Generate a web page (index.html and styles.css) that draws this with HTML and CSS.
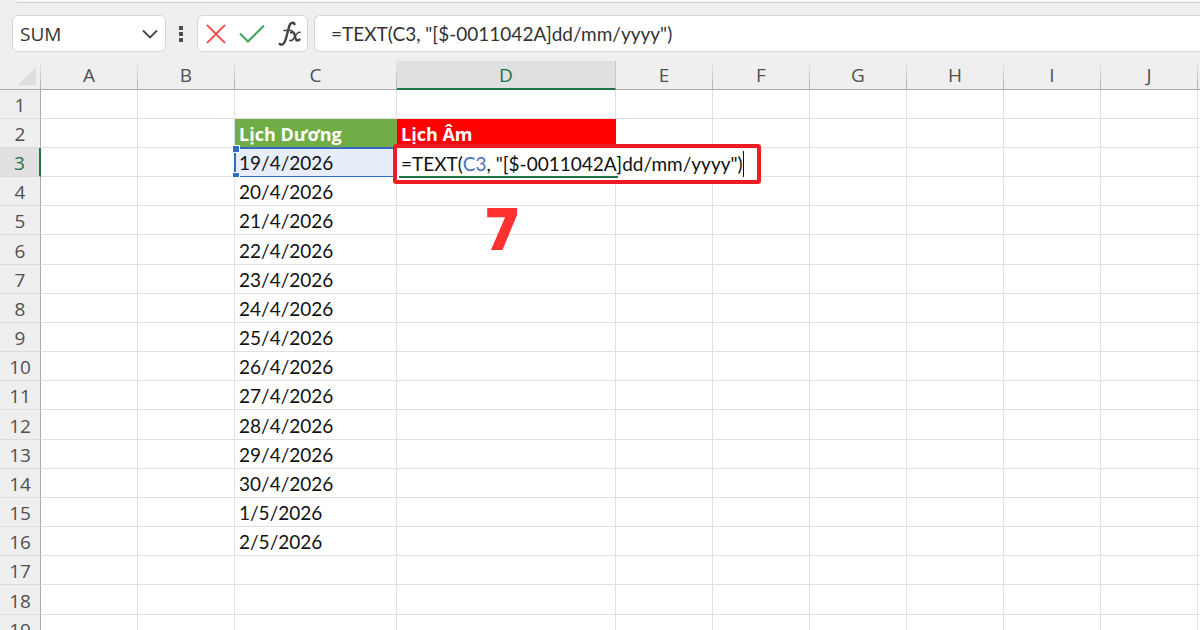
FILE: index.html
```html
<!DOCTYPE html>
<html lang="vi">
<head>
<meta charset="utf-8">
<title>Lịch Dương - Lịch Âm</title>
<meta name="viewport" content="width=device-width, initial-scale=1">
<link rel="stylesheet" href="styles.css">
</head>
<body>
<div class="app">
  <div class="ribbon-edge"></div>
  <header class="formula-bar">
    <div class="name-box">
      <input class="name-input" type="text" value="SUM" aria-label="Name box">
      <button class="icon-button name-toggle" type="button" aria-label="Open name list">
        <svg width="16" height="10" viewBox="0 0 16 10"><path d="M1 1.5 8 8.500 15 1.500" fill="none" stroke="#444" stroke-width="1.800"/></svg>
      </button>
    </div>
    <svg class="grip" width="4" height="16" viewBox="0 0 4 16"><path d="M0 0h4v4H0zM0 6h4v4H0zM0 12h4v4H0z" fill="#505050"/></svg>
    <div class="actions">
      <button class="icon-button" type="button" aria-label="Cancel">
        <svg width="20" height="20" viewBox="0 0 20 20"><path d="M1 1 19 19M19 1 1 19" fill="none" stroke="#f2514d" stroke-width="1.800"/></svg>
      </button>
      <button class="icon-button" type="button" aria-label="Enter">
        <svg width="26" height="20" viewBox="0 0 26 20"><path d="M1 9.500 9 17.500 25 1.500" fill="none" stroke="#45a35e" stroke-width="2"/></svg>
      </button>
      <button class="icon-button" type="button" aria-label="Insert function">
        <svg width="24" height="26" viewBox="0 0 24 26" fill="none" stroke="#444" stroke-linecap="round">
          <path d="M16.500 3.200C16 1.200 13 1 11.600 4.200 10.300 7.500 8.800 16 6.900 20.500 5.700 23.500 3.500 24.400 1.700 23" stroke-width="2.400"/>
          <path d="M6 9.500H14" stroke-width="1.600"/>
          <path d="M13 11.500C15.600 10.200 16.200 12.200 16.800 14.500 17.500 18.300 18.500 21 21.500 18.500" stroke-width="2.400"/>
          <path d="M22 11.300C19.500 10.500 17.200 15 15.500 17.700 14.300 19.500 13.200 20.100 12 19.500" stroke-width="1.700"/>
        </svg>
      </button>
    </div>
    <input class="formula-input" type="text" aria-label="Formula bar" value='=TEXT(C3, "[$-0011042A]dd/mm/yyyy")'>
  </header>
  <main class="sheet">
    <table class="grid">
      <colgroup><col class="col-index"><col><col><col class="col-date"><col class="col-lunar"><col><col><col><col><col><col><col></colgroup>
      <thead>
        <tr><th class="corner" aria-label="Select all"><svg width="18" height="18" viewBox="0 0 18 18"><path d="M18 0v18H0z" fill="#dedede"/></svg></th><th>A</th><th>B</th><th>C</th><th class="active">D</th><th>E</th><th>F</th><th>G</th><th>H</th><th>I</th><th>J</th><th></th></tr>
      </thead>
      <tbody>
        <tr><th>1</th><td></td><td></td><td></td><td></td><td></td><td></td><td></td><td></td><td></td><td></td><td></td></tr>
        <tr><th>2</th><td></td><td></td><td class="title solar">Lịch Dương</td><td class="title lunar">Lịch Âm</td><td></td><td></td><td></td><td></td><td></td><td></td><td></td></tr>
        <tr><th class="active">3</th><td></td><td></td><td class="referenced">19/4/2026<span class="range"><i class="handle top"></i><i class="handle bottom"></i></span></td><td class="editing"><div class="editor" role="textbox" aria-label="D3">=TEXT(<span class="ref">C3</span>, "[$-0011042A]dd/mm/yyyy")<span class="caret"></span></div><span class="selection-line"></span><span class="step">7</span></td><td></td><td></td><td></td><td></td><td></td><td></td><td></td></tr>
        <tr><th>4</th><td></td><td></td><td>20/4/2026</td><td></td><td></td><td></td><td></td><td></td><td></td><td></td><td></td></tr>
        <tr><th>5</th><td></td><td></td><td>21/4/2026</td><td></td><td></td><td></td><td></td><td></td><td></td><td></td><td></td></tr>
        <tr><th>6</th><td></td><td></td><td>22/4/2026</td><td></td><td></td><td></td><td></td><td></td><td></td><td></td><td></td></tr>
        <tr><th>7</th><td></td><td></td><td>23/4/2026</td><td></td><td></td><td></td><td></td><td></td><td></td><td></td><td></td></tr>
        <tr><th>8</th><td></td><td></td><td>24/4/2026</td><td></td><td></td><td></td><td></td><td></td><td></td><td></td><td></td></tr>
        <tr><th>9</th><td></td><td></td><td>25/4/2026</td><td></td><td></td><td></td><td></td><td></td><td></td><td></td><td></td></tr>
        <tr><th>10</th><td></td><td></td><td>26/4/2026</td><td></td><td></td><td></td><td></td><td></td><td></td><td></td><td></td></tr>
        <tr><th>11</th><td></td><td></td><td>27/4/2026</td><td></td><td></td><td></td><td></td><td></td><td></td><td></td><td></td></tr>
        <tr><th>12</th><td></td><td></td><td>28/4/2026</td><td></td><td></td><td></td><td></td><td></td><td></td><td></td><td></td></tr>
        <tr><th>13</th><td></td><td></td><td>29/4/2026</td><td></td><td></td><td></td><td></td><td></td><td></td><td></td><td></td></tr>
        <tr><th>14</th><td></td><td></td><td>30/4/2026</td><td></td><td></td><td></td><td></td><td></td><td></td><td></td><td></td></tr>
        <tr><th>15</th><td></td><td></td><td>1/5/2026</td><td></td><td></td><td></td><td></td><td></td><td></td><td></td><td></td></tr>
        <tr><th>16</th><td></td><td></td><td>2/5/2026</td><td></td><td></td><td></td><td></td><td></td><td></td><td></td><td></td></tr>
        <tr><th>17</th><td></td><td></td><td></td><td></td><td></td><td></td><td></td><td></td><td></td><td></td><td></td></tr>
        <tr><th>18</th><td></td><td></td><td></td><td></td><td></td><td></td><td></td><td></td><td></td><td></td><td></td></tr>
        <tr><th>19</th><td></td><td></td><td></td><td></td><td></td><td></td><td></td><td></td><td></td><td></td><td></td></tr>
      </tbody>
    </table>
  </main>
</div>
</body>
</html>
```
FILE: styles.css
```css
* {
  box-sizing: border-box;
}

body {
  margin: 0;
  background: #efefef;
  color: #111;
  font-family: Lato, "Noto Sans", sans-serif;
  font-size: 19px;
}

.app {
  display: flex;
  flex-direction: column;
  height: 100vh;
  overflow: hidden;
}

.ribbon-edge {
  flex: none;
  height: 3px;
  margin-left: 16px;
  background: #f8f8f8;
  border-bottom: 1px solid #cfcfcf;
  border-bottom-left-radius: 6px;
}

.formula-bar {
  display: flex;
  flex: none;
  align-items: center;
  height: 58px;
  padding: 12px 0 9px 12px;
}

.name-box,
.actions,
.formula-input {
  height: 37px;
  background: #fff;
  border: 1px solid #d6d6d6;
  border-radius: 6px;
}

.name-box {
  display: flex;
  align-items: center;
  width: 154px;
  padding: 0 7px;
}

.name-input {
  flex: 1;
  min-width: 0;
  padding: 0;
  border: 0;
  background: none;
  color: #333;
  font: 19px "Open Sans", "Noto Sans", sans-serif;
}

.icon-button {
  display: flex;
  padding: 0;
  border: 0;
  background: none;
}

.grip {
  margin: 0 14px 0 13px;
}

.actions {
  display: flex;
  align-items: center;
  gap: 13px;
  width: 111px;
  padding: 0 8px;
}

.formula-input {
  flex: 1;
  min-width: 0;
  margin-left: 6px;
  padding: 0 16px;
  border-right: 0;
  border-radius: 6px 0 0 6px;
  color: #333;
  font: inherit;
}

.sheet {
  flex: 1;
  min-height: 0;
  overflow: hidden;
}

.grid {
  width: 1294px;
  table-layout: fixed;
  border-collapse: separate;
  border-spacing: 0;
}

.grid col {
  width: 97px;
}

.grid .col-index {
  width: 41px;
}

.grid .col-date {
  width: 162px;
}

.grid .col-lunar {
  width: 219px;
}

tr {
  height: 29px;
}

tbody tr:nth-child(6n) {
  height: 30px;
}

th,
td {
  padding: 0;
  line-height: 24px;
  white-space: nowrap;
}

td {
  position: relative;
  padding: 2px 0 0 4px;
  background: #fff;
  border-right: 1px solid #e0e0e0;
  border-bottom: 1px solid #e0e0e0;
}

th {
  color: #505050;
  font: 19px/24px "Open Sans", "Noto Sans", sans-serif;
  text-align: center;
}

thead th {
  border-right: 1px solid;
  border-bottom: 1px solid #ababab;
  border-image: linear-gradient(#efefef, #ababab) 1;
}

thead th.active {
  background: #e0e0e0;
  border-bottom: 2px solid #217346;
  border-image: none;
  border-right-color: #c4c4c4;
  color: #217346;
}

thead .corner {
  text-align: right;
}

.corner svg {
  display: block;
  margin: 2px 4px 0 auto;
}

tbody th {
  padding-top: 2px;
  border-right: 1px solid #ababab;
  border-bottom: 1px solid #dcdcdc;
}

tbody th.active {
  background: #e0e0e0;
  border-right: 2px solid #217346;
  color: #217346;
}

.title {
  border-color: transparent;
  color: #fff;
  font-family: "Open Sans", "Noto Sans", sans-serif;
  font-size: 18px;
  font-weight: 700;
}

.solar {
  background: #70ad47;
}

.lunar {
  background: #f00;
}

.referenced {
  background: #e8eef9;
}

.range {
  position: absolute;
  inset: -1px -1px -2px -1px;
  border: 2px solid #356ac3;
}

.handle {
  position: absolute;
  left: -4px;
  width: 8px;
  height: 8px;
  background: #356ac3;
  border: 1px solid #fff;
}

.handle.top {
  top: -4px;
}

.handle.bottom {
  bottom: -4px;
}

.editor {
  position: absolute;
  z-index: 2;
  top: -4px;
  left: -4px;
  display: flex;
  align-items: center;
  height: 40px;
  padding: 0 13px 0 4px;
  background: #fff;
  border: 4px solid #ed1c24;
  border-radius: 3px;
  white-space: pre;
}

.ref {
  color: #4472c4;
}

.caret {
  width: 1px;
  height: 26px;
  background: #111;
}

.selection-line {
  position: absolute;
  z-index: 3;
  right: -3px;
  bottom: -2px;
  left: 2px;
  height: 2px;
  background: #217346;
}

.step {
  position: absolute;
  z-index: 3;
  top: 44px;
  left: 88px;
  color: #ff3131;
  font: 800 58px/72px "Open Sans", sans-serif;
}
```
